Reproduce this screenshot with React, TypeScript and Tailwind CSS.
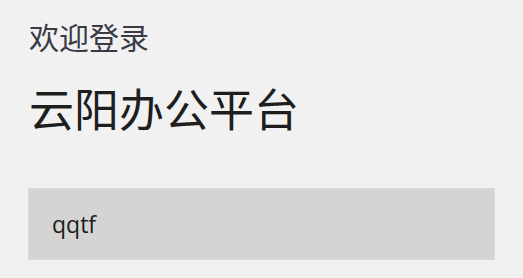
export default function App() {
  return (
    <div className="w-[523px] h-[278px] bg-[#f1f1f1] overflow-hidden pl-[28px] pr-[28px] pt-[19px]" style={{ fontFamily: '"Noto Sans", "Noto Sans CJK SC", sans-serif' }}>
      <div className="text-[30px] leading-[38px] text-[#3a3a46] pl-[1px]">欢迎登录</div>
      <div className="mt-[27px] text-[45px] leading-[52px] text-[#1e1e1e] pl-[1px]">云阳办公平台</div>
      <div className="mt-[52px] w-[467px] h-[72px] bg-[#d4d4d4] border border-[#dbdbdb] flex items-center pl-[23px]">
        <span className="text-[23px] text-[#1c1c1c]" style={{ fontFamily: '"Open Sans", "Noto Sans", sans-serif' }}>qqtf</span>
      </div>
    </div>
  );
}
